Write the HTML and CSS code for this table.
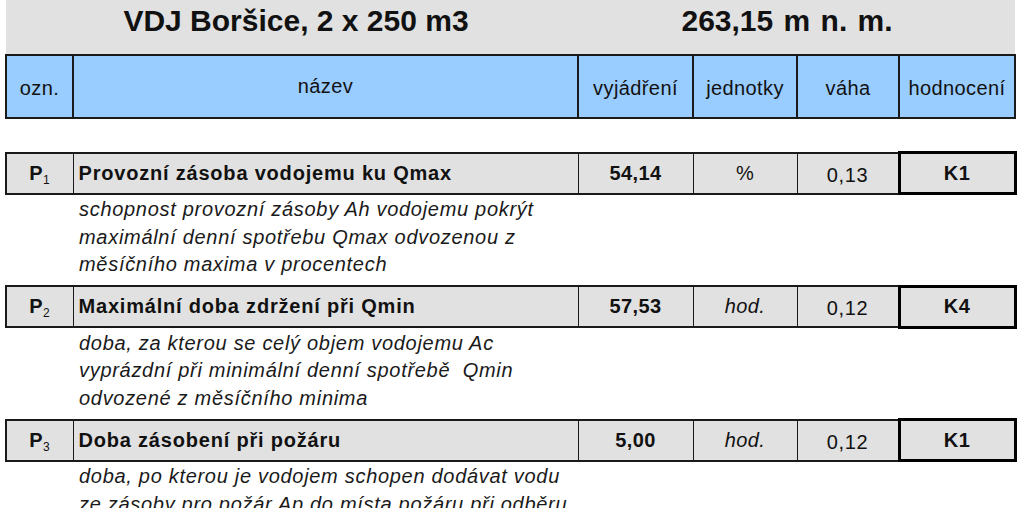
FILE: index.html
```html
<!DOCTYPE html>
<html lang="cs">
<head>
<meta charset="utf-8">
<title>VDJ Boršice</title>
<link rel="stylesheet" href="styles.css">
</head>
<body>
<div class="page">
<table class="sheet">
  <colgroup>
    <col class="c-code">
    <col class="c-name">
    <col class="c-val">
    <col class="c-unit">
    <col class="c-w">
    <col class="c-grade">
  </colgroup>
  <tr class="title">
    <td colspan="2" class="t-name">VDJ Boršice, 2 x 250 m3</td>
    <td colspan="4" class="t-alt">263,15 m n. m.</td>
  </tr>
  <tr class="head">
    <th>ozn.</th>
    <th class="h-name">název</th>
    <th>vyjádření</th>
    <th>jednotky</th>
    <th>váha</th>
    <th>hodnocení</th>
  </tr>
  <tr class="spacer"><td colspan="6"></td></tr>
  <tr class="item">
    <td class="code">P<sub>1</sub></td>
    <td class="name">Provozní zásoba vodojemu ku Qmax</td>
    <td class="val">54,14</td>
    <td class="unit">%</td>
    <td class="w">0,13</td>
    <td class="grade">K1</td>
  </tr>
  <tr class="desc">
    <td></td>
    <td colspan="5" class="note">schopnost provozní zásoby Ah vodojemu pokrýt<br>maximální denní spotřebu Qmax odvozenou z<br>měsíčního maxima v procentech</td>
  </tr>
  <tr class="item">
    <td class="code">P<sub>2</sub></td>
    <td class="name">Maximální doba zdržení při Qmin</td>
    <td class="val">57,53</td>
    <td class="unit it">hod.</td>
    <td class="w">0,12</td>
    <td class="grade">K4</td>
  </tr>
  <tr class="desc">
    <td></td>
    <td colspan="5" class="note">doba, za kterou se celý objem vodojemu Ac<br>vyprázdní při minimální denní spotřebě&nbsp; Qmin<br>odvozené z měsíčního minima</td>
  </tr>
  <tr class="item">
    <td class="code">P<sub>3</sub></td>
    <td class="name">Doba zásobení při požáru</td>
    <td class="val">5,00</td>
    <td class="unit it">hod.</td>
    <td class="w">0,12</td>
    <td class="grade">K1</td>
  </tr>
  <tr class="desc">
    <td></td>
    <td colspan="5" class="note">doba, po kterou je vodojem schopen dodávat vodu<br>ze zásoby pro požár Ap do místa požáru při odběru<br>Qpož</td>
  </tr>
</table>
</div>
</body>
</html>
```

FILE: styles.css
```css
html, body {
  margin: 0;
  padding: 0;
  background: #ffffff;
}
body {
  font-family: "Liberation Sans", Arial, sans-serif;
  color: #111111;
}
.page {
  padding-left: 5px;
}
.sheet {
  border-collapse: collapse;
  table-layout: fixed;
  width: 1009px;
}
.c-code { width: 67px; }
.c-name { width: 505px; }
.c-val { width: 115px; }
.c-unit { width: 104px; }
.c-w { width: 102px; }
.c-grade { width: 116px; }

.sheet td, .sheet th {
  padding: 0;
}

/* title */
.sheet .title td {
  background: #e1e1e1;
  height: 55px;
  font-weight: bold;
  font-size: 30px;
  text-align: center;
  vertical-align: middle;
  padding-bottom: 12px;
  box-sizing: border-box;
}
.sheet .title td.t-name {
  padding-left: 8px;
}
.sheet .title td.t-alt {
  padding-right: 19px;
  word-spacing: 2px;
}

/* header */
.sheet .head th {
  background: #99ccff;
  border: 2px solid #1a1a1a;
  height: 57px;
  font-weight: normal;
  font-size: 20px;
  letter-spacing: 0.4px;
  text-align: center;
  vertical-align: middle;
  padding-top: 4px;
}
.sheet .head th.h-name {
  padding-top: 0;
  padding-bottom: 0;
}

.spacer td {
  height: 32px;
}

/* item rows */
.item td {
  background: #e1e1e1;
  border: 2px solid #1a1a1a;
  border-left-width: 1.5px;
  border-right-width: 1.5px;
  height: 35px;
  font-size: 20px;
  line-height: 23px;
  vertical-align: middle;
  text-align: center;
}
.item td.code {
  border-left-width: 2px;
  font-weight: bold;
  letter-spacing: 0.5px;
}
.code sub {
  font-size: 12px;
  font-weight: normal;
  vertical-align: -4px;
  line-height: 0;
}
.item td.name {
  text-align: left;
  padding-left: 5px;
  font-weight: bold;
  letter-spacing: 0.8px;
}
.item td.val {
  font-weight: bold;
  letter-spacing: 0.4px;
}
.item td.unit {
  letter-spacing: 0.4px;
}
.item td.it {
  font-style: italic;
}
.item td.w {
  padding-top: 4px;
  letter-spacing: 0.6px;
}
.item td.grade {
  border: 3px solid #000000;
  font-weight: bold;
  letter-spacing: 0.4px;
}

/* description rows */
.desc td {
  padding: 1px 0 6px 0;
}
.desc td.note {
  padding-left: 6px;
  font-style: italic;
  font-size: 20px;
  line-height: 27.5px;
  letter-spacing: 0.7px;
  vertical-align: top;
  color: #1a1a1a;
}
```
